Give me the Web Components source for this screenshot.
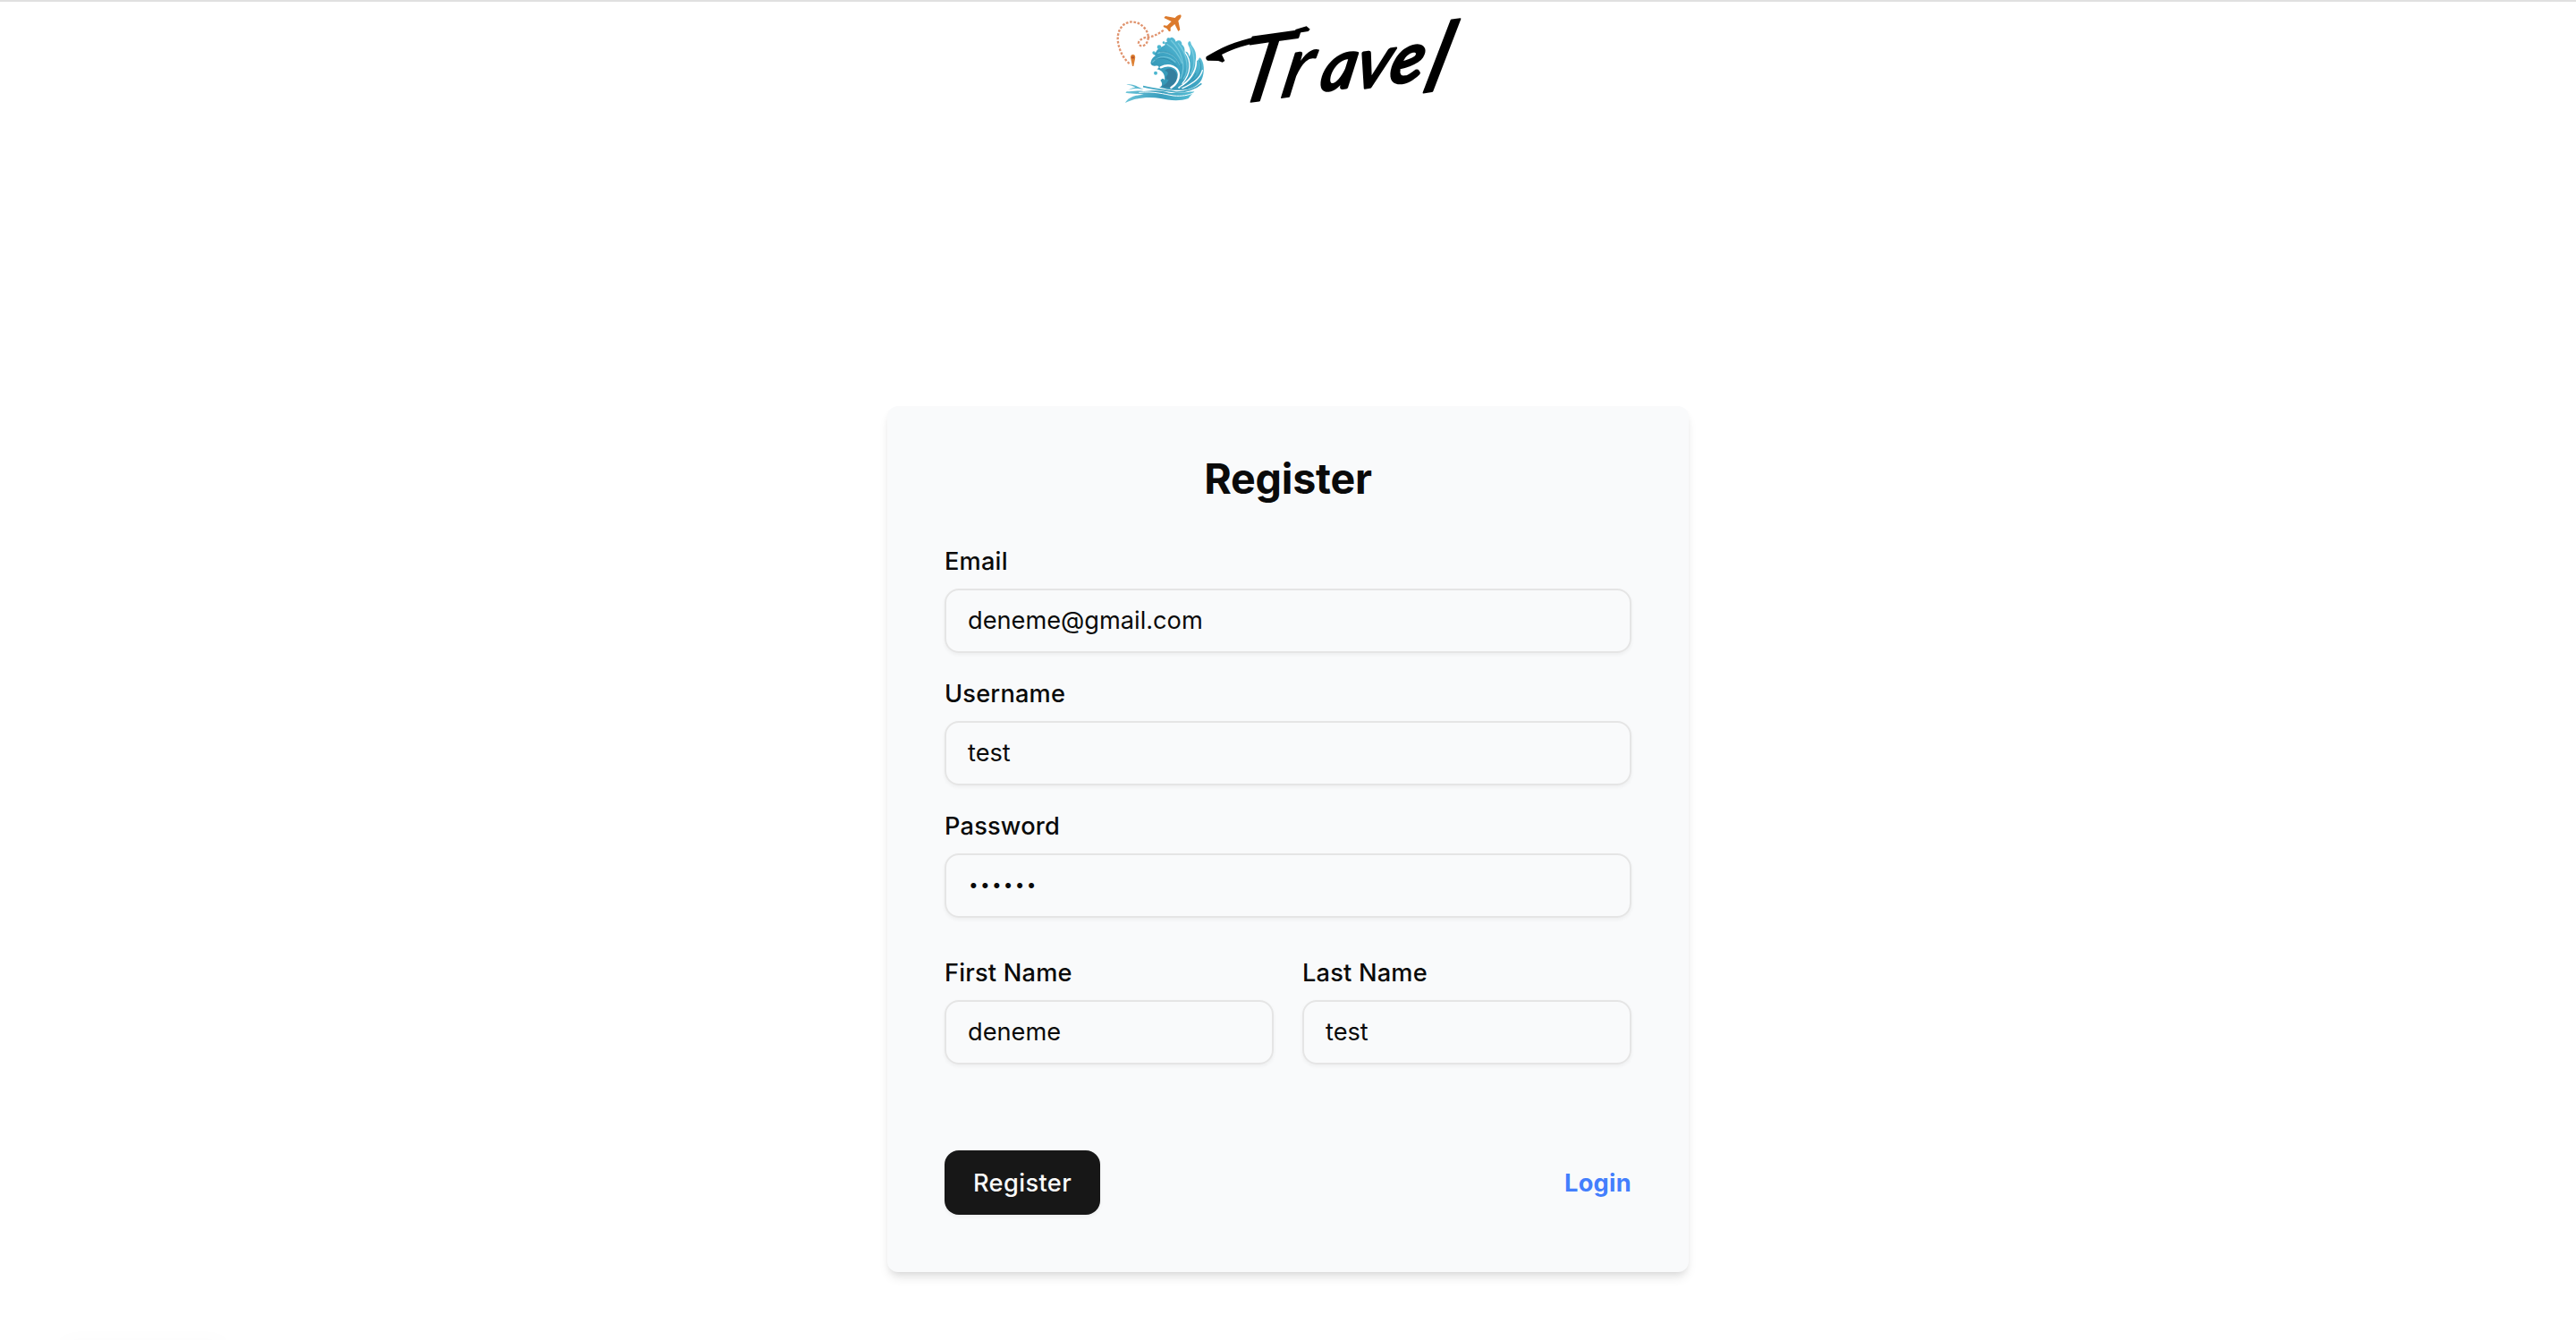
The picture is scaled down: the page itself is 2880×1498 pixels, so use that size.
<!DOCTYPE html>
<html lang="en">
<head>
<meta charset="utf-8">
<title>Travel</title>
<style>
html,body{margin:0;height:100%;overflow:hidden}
body{background:#fff;color:#0a0a0a;font-family:Inter,"Liberation Sans",sans-serif}
</style>
</head>
<body>
<register-page></register-page>
<script>
const define=(name,html)=>customElements.define(name,class extends HTMLElement{
  constructor(){super();this.attachShadow({mode:'open'}).innerHTML=html}
});

define('travel-logo',`<style>:host{display:block;width:420px;height:130px}svg{display:block;overflow:visible}text{font-family:Lato,sans-serif;font-style:italic;font-weight:400}.tall{font-family:"Liberation Sans",sans-serif}</style>
<svg width="420" height="130" viewBox="0 0 1260 390" role="img" aria-label="Travel">
  <defs>
    <linearGradient id="w" x1="0" y1="1" x2="1" y2="0"><stop offset="0" stop-color="#2f8fae"/><stop offset=".5" stop-color="#3fa5c4"/><stop offset="1" stop-color="#74d3e6"/></linearGradient>
    <linearGradient id="b" x1="0" x2="1"><stop offset="0" stop-color="#6cc4d8"/><stop offset=".5" stop-color="#3b9fbe"/><stop offset="1" stop-color="#55bdd4"/></linearGradient>
  </defs>
  <g fill="none" stroke="#e0946f" stroke-width="7" stroke-dasharray="8 5">
    <path d="M98 213C70 190 55 145 60 118C66 80 98 66 126 77C150 88 166 112 160 134C156 152 138 160 130 149C124 138 142 126 160 125C182 122 198 112 216 99"/>
  </g>
  <path fill="#dc7a2c" d="M271 50C263 49 257 54 251 60L219 54L214 60L239 72L224 86L213 85L212 90L224 96L231 106L236 104L236 93L250 81L262 105L268 100L262 70C269 62 274 56 271 50Z"/>
  <path fill="#dd8134" d="M110 183C102 183 101 190 103 198L108 222L112 222L117 198C119 189 117 183 110 183Z"/>
  <circle cx="110" cy="193" r="4" fill="#b5522c"/>
  <path fill="url(#w)" d="M170 208C172 196 180 190 186 186C176 182 176 176 186 176C194 160 212 156 218 150C214 142 220 139 225 142C220 130 226 124 234 128C242 121 251 130 254 140C264 130 276 138 274 150C282 154 285 166 283 174C292 172 298 178 298 190C306 180 303 165 296 152C291 140 302 135 304 143C304 150 312 157 316 166C322 178 323 192 320 204C330 206 330 196 334 193C350 204 352 245 340 268C326 292 298 303 270 302C240 304 214 298 198 292C212 290 208 276 202 270C208 262 214 262 216 270C220 248 204 234 190 232C202 226 196 218 184 221C174 222 168 216 170 208Z"/>
  <path fill="#347f9f" d="M216 238C228 222 248 230 256 246C261 262 254 282 236 294C220 293 210 292 206 290C222 282 226 276 230 267C218 268 218 258 226 251C230 244 224 238 216 238Z"/>
  <g fill="none" stroke="#fff" stroke-linecap="round">
    <path stroke-width="7" d="M203 226C232 212 262 224 264 250C264 272 252 286 238 294"/>
    <path stroke-width="4" d="M285 176C306 204 306 244 276 280"/>
    <path stroke-width="5" d="M322 206C322 238 304 268 264 294"/>
    <path stroke-width="4" d="M343 236C336 262 314 278 276 296"/>
  </g>
  <g fill="none" stroke="#9be0ee" stroke-width="4" stroke-linecap="round" opacity=".5">
    <path d="M238 136C268 166 292 218 270 262M262 146C290 180 302 230 280 264M176 208C198 184 230 186 252 208M194 178C226 166 256 190 268 218M302 154C317 184 319 218 304 248M224 148C246 160 266 186 274 212"/>
  </g>
  <g fill="none" stroke="#25799a" stroke-width="3" stroke-linecap="round" opacity=".5">
    <path d="M184 200C208 188 240 200 256 222M202 174C232 170 256 188 270 220M334 204C344 226 336 254 310 272M268 292C292 284 312 268 320 246"/>
  </g>
  <path fill="url(#b)" d="M88 284C108 279 126 291 146 300C116 295 102 297 88 307C104 307 126 302 146 306C182 302 206 303 230 311C262 314 296 308 316 307C310 314 303 321 296 330C266 341 228 336 202 330C166 324 120 326 84 345C92 329 112 319 146 317C124 313 104 315 85 311C94 300 106 293 118 293C108 287 99 284 88 284Z"/>
  <path fill="none" stroke="#fff" stroke-width="3" d="M130 310C180 305 214 316 246 321C274 324 296 319 312 312"/>
  <path fill="none" stroke="#43a8c4" stroke-width="5" d="M144 290C186 300 220 302 254 309C286 310 320 298 340 280"/>
  <g fill="#4bb6cf"><circle cx="186" cy="245" r="6"/><circle cx="180" cy="177" r="5"/><circle cx="198" cy="158" r="7"/><circle cx="213" cy="143" r="4"/></g>
  <path d="M356 190C400 162 450 138 530 122L536 142C490 150 450 162 408 183L418 204L410 209L396 204L360 203Q352 198 356 190Z"/>
  <path d="M655 99L692 88L704 98L698 105L655 112Z"/>
  <text transform="matrix(1 -.14 -.2 1 520 340)" stroke="#000" stroke-width="5" stroke-linejoin="round"><tspan x="-74" y="0" font-size="312">T</tspan><tspan x="80" y="0" font-size="290">r</tspan><tspan x="212" y="-4" font-size="228" stroke-width="11">a</tspan><tspan x="330" y="6" font-size="240" stroke-width="9">v</tspan><tspan x="446" y="4" font-size="228" stroke-width="13">e</tspan><tspan class="tall" x="570" y="50" font-size="325" stroke-width="7">l</tspan></text>
</svg>`);

define('form-field',`<style>
:host{display:flex;flex-direction:column;gap:16px;flex:1 1 0;min-width:0}
.label{font-size:27.2px;line-height:28px;font-weight:500;letter-spacing:.2px;white-space:nowrap}
.box{box-sizing:border-box;height:72px;border:2px solid #e5e5e5;border-radius:16px;padding:0 24px;display:flex;align-items:center;font-size:27.2px;line-height:40px;box-shadow:0 2px 4px rgba(0,0,0,.05)}
</style><div class="label"><slot name="label"></slot></div><div class="box"><slot></slot></div>`);

define('submit-button',`<style>:host{box-sizing:border-box;display:flex;align-items:center;justify-content:center;width:174px;height:72px;border-radius:16px;background:#171717;color:#fafafa;font-size:27.2px;font-weight:500;letter-spacing:.4px;box-shadow:0 2px 4px rgba(0,0,0,.05)}</style><slot></slot>`);

define('register-card',`<style>
:host{display:block;box-sizing:border-box;width:896px;height:968px;padding:49px 64px 64px;border-radius:12px;background:#f9fafb;box-shadow:0 8px 12px -2px rgba(0,0,0,.1),0 4px 8px -4px rgba(0,0,0,.1)}
h2{margin:0 0 47px;font-size:46.6px;line-height:64px;font-weight:700;letter-spacing:-.2px;text-align:center}
.stack{display:flex;flex-direction:column;gap:32px}
.row{display:flex;gap:32px;margin-top:48px}
.foot{display:flex;justify-content:space-between;align-items:center;margin-top:96px}
a{color:#437efd;font-size:27.2px;font-weight:700;letter-spacing:.3px}
.dots{font-size:19px;letter-spacing:2.25px;margin-left:1px}
</style>
<h2>Register</h2>
<div class="stack">
<form-field><span slot="label">Email</span><span>deneme@gmail.com</span></form-field>
<form-field><span slot="label">Username</span><span>test</span></form-field>
<form-field><span slot="label">Password</span><span class="dots">••••••</span></form-field>
</div>
<div class="row">
<form-field><span slot="label">First Name</span><span>deneme</span></form-field>
<form-field><span slot="label">Last Name</span><span>test</span></form-field>
</div>
<div class="foot"><submit-button>Register</submit-button><a>Login</a></div>`);

define('register-page',`<style>
:host{display:flex;flex-direction:column;align-items:center;height:1498px;position:relative;overflow:hidden}
.line{width:100%;height:2px;background:#e0e0e0}
travel-logo{margin-top:-2px}
register-card{margin-top:324px}
.hint{position:absolute;left:66px;bottom:-20px;width:188px;height:20px;border-radius:10px;box-shadow:0 0 24px rgba(0,0,0,.02)}
</style><div class="line"></div><travel-logo></travel-logo><register-card></register-card><div class="hint"></div>`);
</script>
</body>
</html>
